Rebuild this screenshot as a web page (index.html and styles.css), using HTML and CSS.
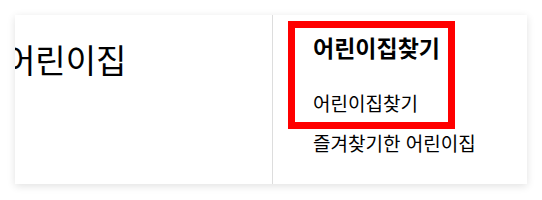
FILE: index.html
```html
<!DOCTYPE html>
<html lang="ko">
<head>
  <meta charset="UTF-8">
  <meta name="viewport" content="width=device-width, initial-scale=1.0">
  <title>어린이집</title>
  <link rel="stylesheet" href="styles.css">
</head>
<body>
  <div class="menu">
    <div class="menu-title">
      <h2 class="title">어린이집</h2>
    </div>
    <div class="menu-links">
      <div class="group selected">
        <div class="group-head">어린이집찾기</div>
        <a class="link" href="#">어린이집찾기</a>
      </div>
      <a class="link outer" href="#">즐겨찾기한 어린이집</a>
    </div>
  </div>
</body>
</html>
```

FILE: styles.css
```css
body {
  margin: 0;
  background-color: #fff;
  font-family: "Noto Sans CJK KR", "Noto Sans", sans-serif;
  color: #000;
}
.menu {
  display: flex;
  width: 512px;
  height: 169px;
  margin: 15px;
  background-color: #fff;
  box-shadow: 0 2px 8px rgba(0, 0, 0, 0.12);
}
.menu-title {
  width: 257px;
  border-right: 1px solid #ddd;
  overflow: hidden;
}
.title {
  margin: 22px 0 0 -10px;
  font-size: 33px;
  font-weight: normal;
  line-height: 44px;
  white-space: nowrap;
}
.menu-links {
  flex: 1;
  padding: 6px 0 0 15px;
}
.group {
  width: 135px;
  padding: 4px 0 6px 18px;
}
.group.selected {
  border: 7px solid #f00;
}
.group-head {
  font-size: 23px;
  font-weight: bold;
  line-height: 30px;
  margin-bottom: 28px;
}
.link {
  display: block;
  font-size: 19px;
  line-height: 26px;
  color: #000;
  text-decoration: none;
  white-space: nowrap;
}
.link.outer {
  line-height: 27px;
  padding-left: 25px;
}
```
